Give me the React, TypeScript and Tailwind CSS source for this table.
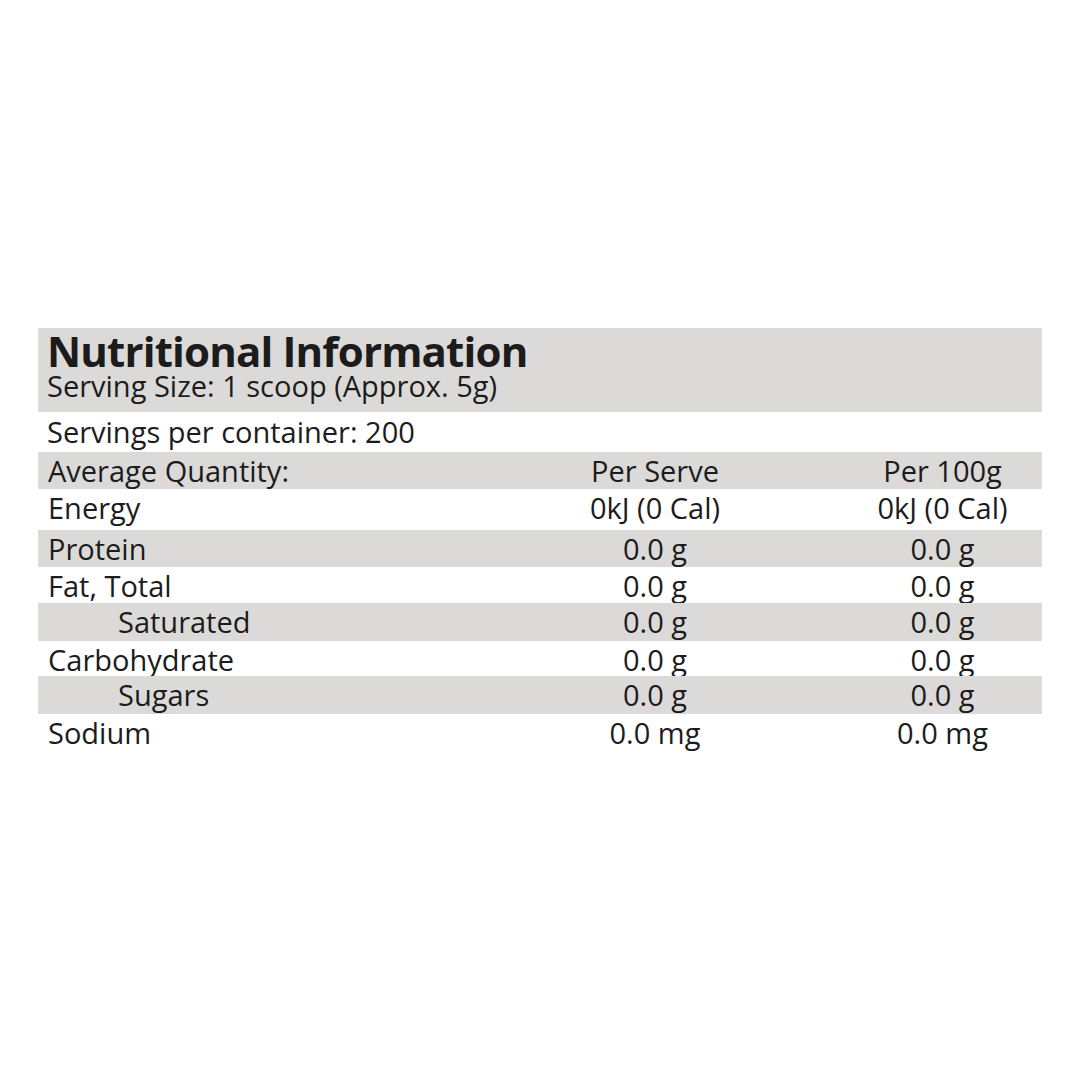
const rows = [
  { label: "Energy", serve: "0kJ (0 Cal)", per100: "0kJ (0 Cal)", shaded: false, indent: false, h: "h-[41px]" },
  { label: "Protein", serve: "0.0 g", per100: "0.0 g", shaded: true, indent: false, h: "h-[37px]" },
  { label: "Fat, Total", serve: "0.0 g", per100: "0.0 g", shaded: false, indent: false, h: "h-[36px]" },
  { label: "Saturated", serve: "0.0 g", per100: "0.0 g", shaded: true, indent: true, h: "h-[38px]" },
  { label: "Carbohydrate", serve: "0.0 g", per100: "0.0 g", shaded: false, indent: false, h: "h-[35px]" },
  { label: "Sugars", serve: "0.0 g", per100: "0.0 g", shaded: true, indent: true, h: "h-[38px]" },
  { label: "Sodium", serve: "0.0 mg", per100: "0.0 mg", shaded: false, indent: false, h: "h-[41px]" },
];

const Row = ({
  label,
  serve,
  per100,
  shaded,
  indent,
  h,
}: {
  label: string;
  serve: string;
  per100: string;
  shaded: boolean;
  indent: boolean;
  h: string;
}) => (
  <div className={`grid grid-cols-[517px_200px_1fr] items-start leading-[35px] pt-[1px] ${h} ${shaded ? "bg-[#dbdad8]" : ""}`}>
    <span className={indent ? "pl-[80px]" : "pl-[10px]"}>{label}</span>
    <span className="text-center">{serve}</span>
    <span className="pl-[88px] text-center leading-[32px] pt-[2px]">{per100}</span>
  </div>
);

export default function App() {
  return (
    <div
      className="w-[1080px] h-[1080px] bg-white text-[#1c1c1c] pt-[328px] pl-[38px]"
      style={{ fontFamily: '"Open Sans", "Noto Sans", sans-serif' }}
    >
      <div className="w-[1004px] flex flex-col text-[29px] font-stretch-[90%]">
        <div className="bg-[#dbdad8] h-[84px] pl-[9px] pt-[3px] flex flex-col">
          <h1 className="text-[42px] font-bold leading-[40px] tracking-[-0.02em]">Nutritional Information</h1>
          <div className="leading-[28px] mt-[1px]">Serving Size: 1 scoop (Approx. 5g)</div>
        </div>
        <div className="h-[40px] pl-[9px] leading-[40px]">Servings per container: 200</div>
        <div className="grid grid-cols-[517px_200px_1fr] items-start leading-[35px] pt-[1px] h-[37px] bg-[#dbdad8]">
          <span className="pl-[10px]">Average Quantity:</span>
          <span className="text-center">Per Serve</span>
          <span className="pl-[88px] text-center leading-[32px] pt-[2px]">Per 100g</span>
        </div>
        {rows.map((r) => (
          <Row key={r.label} {...r} />
        ))}
      </div>
    </div>
  );
}
